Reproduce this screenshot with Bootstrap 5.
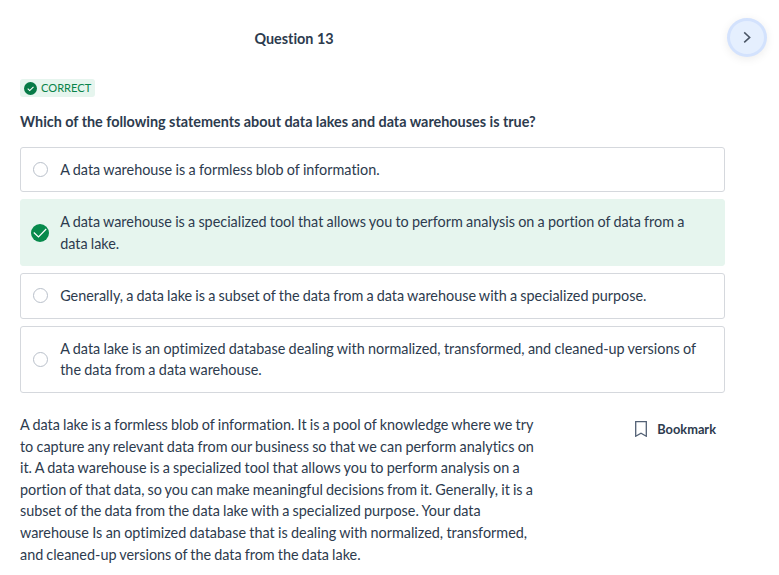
<!DOCTYPE html>
<html lang="en">
<head>
<meta charset="utf-8">
<title>Question 13</title>
<link href="https://cdn.jsdelivr.net/npm/bootstrap@5.3.0/dist/css/bootstrap.min.css" rel="stylesheet">
<style>
body{font-family:Lato,"Liberation Sans",sans-serif;font-size:14.4px;line-height:21.6px;color:#2d3b4e;font-variant-ligatures:none;overflow:hidden}
.top-bar{height:75px;padding:0 12px 0 20px}
.top-title{width:548px;padding-top:2px}
.next-btn{width:40px;height:39px;background:#e5effe;border:3px solid #d3e2fd;box-shadow:0 2px 10px rgba(0,0,0,.08)}
.quiz{padding:4px 54px 0 20px}
.result-tag{background:#e6f5ee;color:#088349;font-size:11.1px;height:18px;line-height:18px;padding:0 4px;border-radius:3px;gap:4px}
.prompt{margin:10px 0 14px;line-height:22px;word-spacing:-.08px}
.answers{gap:7px;word-spacing:-.48px}
.answer{border:1px solid #d5d8dd;border-radius:3px;padding:0 20px 0 12px;height:45.5px;gap:12.2px}
.answer.right{background:#e6f5ee;border-color:#e6f5ee;padding-left:10px;gap:11.2px}
.answer.tall{height:67px}
.dot{width:15px;height:15px;border:1px solid #b9c0ca;border-radius:50%}
.why{margin-top:21.4px;word-spacing:-.46px}
.ws-a{word-spacing:-.36px}
.ws-b{word-spacing:-.53px}
.ws-c{word-spacing:-.6px}
.save{padding:4.6px 9px 0 0;gap:10px;font-size:12.8px}
</style>
</head>
<body class="bg-white">
<header class="top-bar d-flex align-items-center justify-content-between">
<div class="top-title text-center fw-bold">Question 13</div>
<button class="next-btn rounded-circle p-0 d-flex align-items-center justify-content-center" aria-label="Next"><svg width="12" height="14" viewBox="0 0 12 14" fill="none" stroke="#4a5565" stroke-width="1.5"><path d="M3.200 1.400 8.700 6.400l-5.500 5"/></svg></button>
</header>
<main class="quiz">
<div class="result-tag d-inline-flex align-items-center align-top"><svg width="13" height="13" viewBox="0 0 13 13"><circle cx="6.500" cy="6.500" r="6.500" fill="#067a46"/><path d="m3.700 6.700 2 1.900 3.800-3.800" fill="none" stroke="#fff" stroke-width="1.100"/></svg><span>CORRECT</span></div>
<p class="prompt fw-bold">Which of the following statements about data lakes and data warehouses is true?</p>
<div class="answers d-flex flex-column">
<div class="answer d-flex align-items-center"><span class="dot flex-shrink-0"></span><span class="ws-a">A data warehouse is a formless blob of information.</span></div>
<div class="answer right tall d-flex align-items-center"><svg class="flex-shrink-0" width="18" height="18" viewBox="0 0 18 18"><circle cx="9" cy="9" r="9" fill="#078a4c"/><path d="m2.800 8.500 4.700 4.500 7.700-8" fill="none" stroke="#fff" stroke-width="1.200"/></svg><span>A data warehouse is a specialized tool that allows you to perform analysis on a portion of data from a<br>data lake.</span></div>
<div class="answer d-flex align-items-center"><span class="dot flex-shrink-0"></span><span class="ws-b">Generally, a data lake is a subset of the data from a data warehouse with a specialized purpose.</span></div>
<div class="answer tall d-flex align-items-center"><span class="dot flex-shrink-0"></span><span class="ws-a">A data lake is an optimized database dealing with normalized, transformed, and cleaned-up versions of<br>the data from a data warehouse.</span></div>
</div>
<div class="why d-flex justify-content-between align-items-start">
<p class="mb-0 text-nowrap"><span class="ws-b">A data lake is a formless blob of information. It is a pool of knowledge where we try</span><br>to capture any relevant data from our business so that we can perform analytics on<br>it. A data warehouse is a specialized tool that allows you to perform analysis on a<br><span class="ws-c">portion of that data, so you can make meaningful decisions from it. Generally, it is a</span><br>subset of the data from the data lake with a specialized purpose. Your data<br><span class="ws-a">warehouse Is an optimized database that is dealing with normalized, transformed,</span><br><span class="ws-c">and cleaned-up versions of the data from the data lake.</span></p>
<div class="save d-flex align-items-center fw-bold"><svg width="12" height="16" viewBox="0 0 12 16" fill="none" stroke="#526074" stroke-width="1.300"><path d="M.7.700h10.600v14.500L6 12.300.7 15.200z"/></svg><span>Bookmark</span></div>
</div>
</main>
<script src="https://cdn.jsdelivr.net/npm/bootstrap@5.3.0/dist/js/bootstrap.bundle.min.js"></script>
</body>
</html>
